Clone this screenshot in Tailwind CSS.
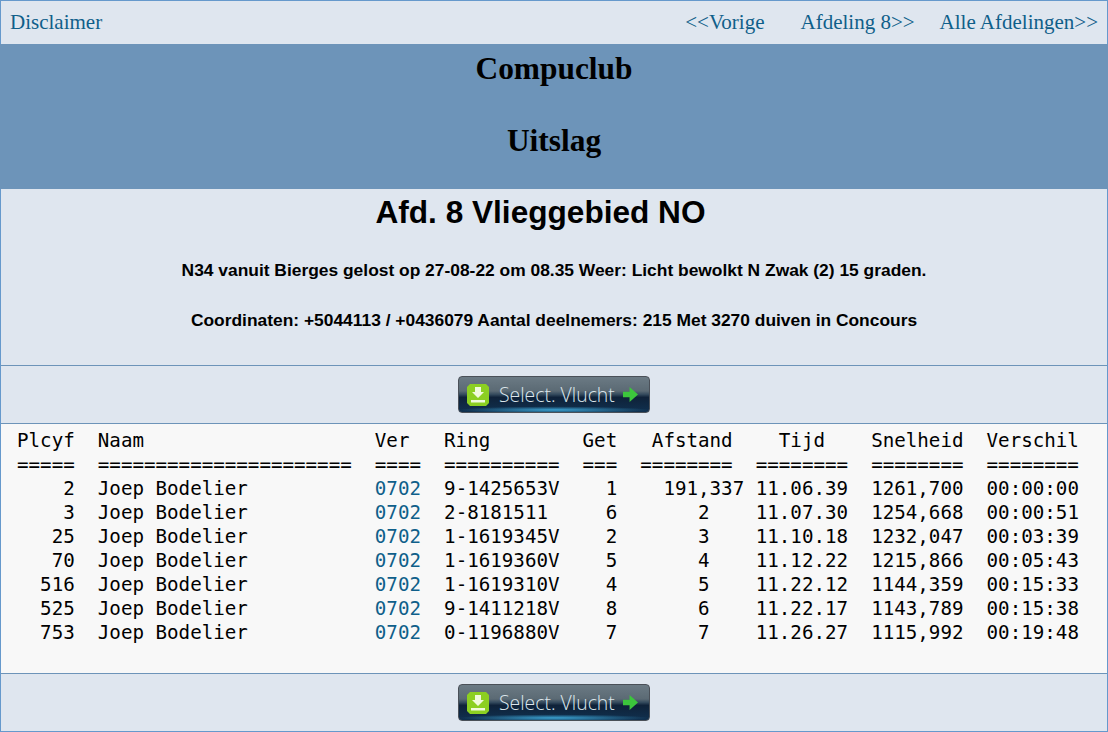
<!DOCTYPE html>
<html lang="en">
<head>
  <meta charset="UTF-8" />
  <title>Compuclub Uitslag</title>
  <script src="https://cdn.jsdelivr.net/npm/@tailwindcss/browser@4"></script>
</head>
<body class="h-[732px] overflow-hidden bg-[#dfe6ef]">
  <div class="h-[732px] flex flex-col border border-[#6699cc] font-['Liberation_Serif',serif]">
    <!-- top nav -->
    <div class="h-[43px] shrink-0 flex items-center justify-between px-[9px] text-[21px] text-[#0f5f8a]">
      <a href="#">Disclaimer</a>
      <div class="flex">
        <a href="#" class="mr-[36px]">&lt;&lt;Vorige</a>
        <a href="#" class="mr-[25px]">Afdeling 8&gt;&gt;</a>
        <a href="#">Alle Afdelingen&gt;&gt;</a>
      </div>
    </div>

    <div class="h-[145px] shrink-0 -mx-px bg-[#6d94b9] text-black text-center font-bold text-[31.4px] leading-[37px] pt-[6px]">
      <h2>Compuclub</h2>
      <h2 class="mt-[35px]">Uitslag</h2>
    </div>

    <!-- flight info -->
    <div class="h-[177px] shrink-0 border-b border-[#6d94b9] text-black text-center font-['Liberation_Sans',sans-serif] font-bold">
      <h1 class="text-[31.6px] leading-[37px] pt-[5px] pr-[27px]">Afd. 8 Vlieggebied NO</h1>
      <p class="text-[17.4px] leading-[20px] mt-[29px]">N34 vanuit Bierges gelost op 27-08-22 om 08.35 Weer: Licht bewolkt N Zwak (2) 15 graden.</p>
      <p class="text-[17.4px] leading-[20px] mt-[30px]">Coordinaten: +5044113 / +0436079 Aantal deelnemers: 215 Met 3270 duiven in Concours</p>
    </div>

    <div class="h-[58px] shrink-0 border-b border-[#6d94b9] flex items-center justify-center">
      <button class="relative w-[192px] h-[37px] rounded-[4px] border border-[#4a5058] bg-[radial-gradient(ellipse_50%_10%_at_50%_94%,#3aa0cf_0%,transparent_100%),linear-gradient(#6b7a84_0%,#5b6a74_40%,#33495c_50%,#0f2239_58%,#10304f_100%)] flex items-center pl-[8px]">
        <svg width="22" height="22" viewBox="0 0 22 22" class="shrink-0">
          <path d="M3 0h16l3 3v16l-3 3H3l-3-3V3z" fill="#8ccf22" />
          <path d="M8 3h6v5h3l-6 6-6-6h3z" fill="#f0fadc" />
          <path d="M4 16h14v2.5H4z" fill="#f0fadc" />
        </svg>
        <span class="ml-[10px] text-[19.4px] text-[#dce6ec] font-['Open_Sans',sans-serif] font-light">Select. Vlucht</span>
        <svg width="15" height="15" viewBox="0 0 16 16" class="ml-[8px] shrink-0">
          <path d="M0 5h7V0l9 8-9 8v-5H0z" fill="#3cc63c" />
        </svg>
      </button>
    </div>

    <pre class="h-[249px] shrink-0 -mx-px bg-[#f8f8f8] border-x border-[#6699cc] pl-[16px] pt-[5px] text-black text-[19.18px] leading-[24px] font-['DejaVu_Sans_Mono',monospace]">Plcyf  Naam                    Ver   Ring        Get   Afstand    Tijd    Snelheid  Verschil
=====  ======================  ====  ==========  ===  ========  ========  ========  ========
    2  Joep Bodelier           <a href="#" class="text-[#0f5f8a]">0702</a>  9-1425653V    1    191,337 11.06.39  1261,700  00:00:00
    3  Joep Bodelier           <a href="#" class="text-[#0f5f8a]">0702</a>  2-8181511     6       2    11.07.30  1254,668  00:00:51
   25  Joep Bodelier           <a href="#" class="text-[#0f5f8a]">0702</a>  1-1619345V    2       3    11.10.18  1232,047  00:03:39
   70  Joep Bodelier           <a href="#" class="text-[#0f5f8a]">0702</a>  1-1619360V    5       4    11.12.22  1215,866  00:05:43
  516  Joep Bodelier           <a href="#" class="text-[#0f5f8a]">0702</a>  1-1619310V    4       5    11.22.12  1144,359  00:15:33
  525  Joep Bodelier           <a href="#" class="text-[#0f5f8a]">0702</a>  9-1411218V    8       6    11.22.17  1143,789  00:15:38
  753  Joep Bodelier           <a href="#" class="text-[#0f5f8a]">0702</a>  0-1196880V    7       7    11.26.27  1115,992  00:19:48</pre>

    <div class="flex-1 border-t border-[#6d94b9] flex items-center justify-center">
      <button class="relative w-[192px] h-[37px] rounded-[4px] border border-[#4a5058] bg-[radial-gradient(ellipse_50%_10%_at_50%_94%,#3aa0cf_0%,transparent_100%),linear-gradient(#6b7a84_0%,#5b6a74_40%,#33495c_50%,#0f2239_58%,#10304f_100%)] flex items-center pl-[8px]">
        <svg width="22" height="22" viewBox="0 0 22 22" class="shrink-0">
          <path d="M3 0h16l3 3v16l-3 3H3l-3-3V3z" fill="#8ccf22" />
          <path d="M8 3h6v5h3l-6 6-6-6h3z" fill="#f0fadc" />
          <path d="M4 16h14v2.5H4z" fill="#f0fadc" />
        </svg>
        <span class="ml-[10px] text-[19.4px] text-[#dce6ec] font-['Open_Sans',sans-serif] font-light">Select. Vlucht</span>
        <svg width="15" height="15" viewBox="0 0 16 16" class="ml-[8px] shrink-0">
          <path d="M0 5h7V0l9 8-9 8v-5H0z" fill="#3cc63c" />
        </svg>
      </button>
    </div>
  </div>
</body>
</html>
